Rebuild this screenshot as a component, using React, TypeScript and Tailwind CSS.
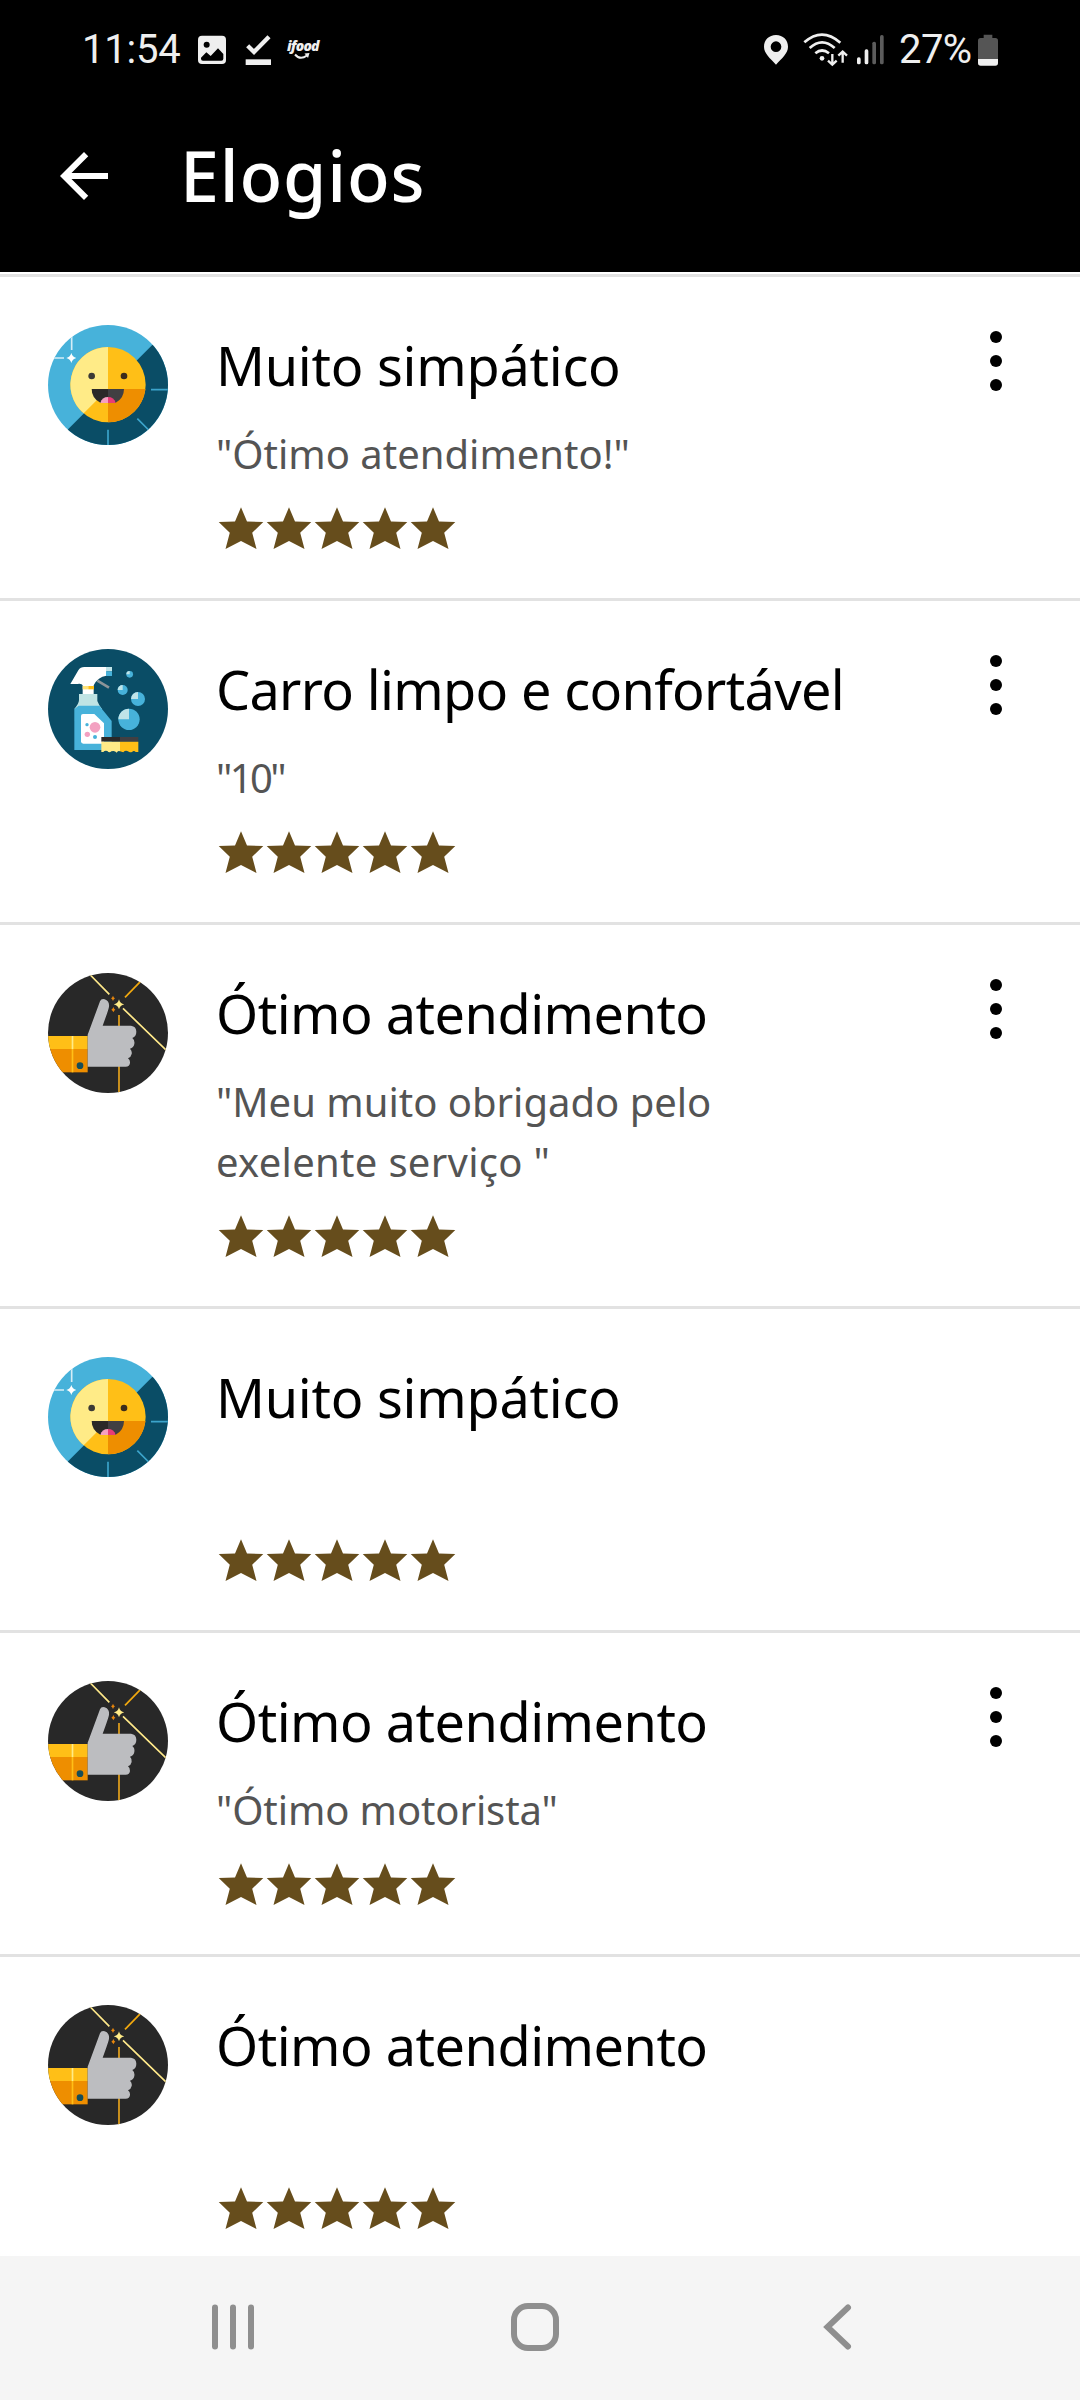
type AvatarKind = "smile" | "spray" | "thumb";

interface Line {
  text: string;
  className?: string;
}

interface Compliment {
  kind: AvatarKind;
  title: string;
  titleClass: string;
  lines: Line[];
  menu: boolean;
}

const COMPLIMENTS: Compliment[] = [
  { kind: "smile", title: "Muito simpático", titleClass: "tracking-[-0.25px]", lines: [{ text: '"Ótimo atendimento!"' }], menu: true },
  { kind: "spray", title: "Carro limpo e confortável", titleClass: "tracking-[-0.66px]", lines: [{ text: '"10"', className: "tracking-[-2.6px]" }], menu: true },
  {
    kind: "thumb",
    title: "Ótimo atendimento",
    titleClass: "tracking-[-0.5px]",
    lines: [{ text: '"Meu muito obrigado pelo' }, { text: 'exelente serviço "', className: "tracking-[0.3px]" }],
    menu: true,
  },
  { kind: "smile", title: "Muito simpático", titleClass: "tracking-[-0.25px]", lines: [], menu: false },
  { kind: "thumb", title: "Ótimo atendimento", titleClass: "tracking-[-0.5px]", lines: [{ text: '"Ótimo motorista"', className: "tracking-[-0.1px]" }], menu: true },
  { kind: "thumb", title: "Ótimo atendimento", titleClass: "tracking-[-0.5px]", lines: [], menu: false },
];

function SmileAvatar() {
  return (
    <svg className="block size-full" viewBox="24 30 360 360">
      <rect x="24" y="30" width="360" height="360" fill="#47b2da" />
      <path d="M24 403L403 24V403Z" fill="#0a4d66" />
      <circle cx="204" cy="209" r="113" fill="#ffbf17" />
      <path d="M204 96V222L131 295A113 113 0 0 1 204 96Z" fill="#ffeb87" />
      <path d="M204 222H316.500A113 113 0 0 1 204 322Z" fill="#ee8e00" />
      <circle cx="155" cy="183" r="10" fill="#3c3a36" />
      <circle cx="252" cy="183" r="10" fill="#3c2c1c" />
      <path d="M155 222H204V263H181Q155 250 155 222Z" fill="#2b2928" />
      <path d="M204 222H252Q252 250 227 263H204Z" fill="#413f42" />
      <path d="M181 263Q186 246 204 246V264H183Z" fill="#f5a0c0" />
      <path d="M227 263Q222 246 204 246V264H225Z" fill="#e93c77" />
      <path d="M95 60V105M40 129H72" stroke="#d5edf6" strokeWidth="5" />
      <path d="M94 114Q97 126 109 129Q97 132 94 144Q91 132 79 129Q91 126 94 114Z" fill="#fff" />
      <path d="M333 224H384M292 311L326 345M204 344V390" stroke="#3ca4cb" strokeWidth="5" />
    </svg>
  );
}

function SprayAvatar() {
  return (
    <svg className="block size-full" viewBox="24 27 360 360">
      <rect x="24" y="27" width="360" height="360" fill="#0a4d66" />
      <path d="M91 132L115 91Q121 81 133 81H199V107Q174 110 161 136H128Q126 130 112 132Z" fill="#fff" />
      <rect x="198" y="81" width="18" height="13" fill="#c0e4e8" />
      <rect x="198" y="94" width="18" height="14" fill="#47b2da" />
      <path d="M172 122L207 143" stroke="#8c9498" strokeWidth="8" />
      <rect x="128" y="135" width="33" height="28" fill="#fff" />
      <rect x="128" y="138" width="17" height="10" fill="#ffe47a" />
      <rect x="145" y="138" width="17" height="10" fill="#ffbf17" />
      <path d="M117 162H172V183Q176 194 186 207H103Q117 190 117 180Z" fill="#c0e4e4" />
      <path d="M116 197H178L215 243V330H103V207Z" fill="#47b2da" />
      <path d="M129 222H163L192 250V304Q192 311 185 311H130Q123 311 123 304V228Q123 222 129 222Z" fill="#fff" />
      <circle cx="165" cy="262" r="16" fill="#f3a1c1" />
      <circle cx="142" cy="283" r="8" fill="#f3a1c1" />
      <circle cx="141" cy="254" r="5" fill="#47b2da" />
      <circle cx="165" cy="291" r="6" fill="#47b2da" />
      <rect x="184" y="291" width="56" height="14" fill="#2b2928" />
      <rect x="240" y="291" width="55" height="14" fill="#413f42" />
      <path d="M184 305H240V334Q234 330 230 338Q224 330 214 334Q208 340 202 333Q194 331 190 336H184Z" fill="#ffeb87" />
      <path d="M240 305H295V336H287Q282 330 276 336Q268 338 264 334Q256 330 250 337L240 334Z" fill="#ffbf17" />
      {[[269, 103, 10], [248, 150, 15], [294, 177, 21], [267, 238, 32]].map(([x, y, r]) => (
        <g key={x}>
          <circle cx={x} cy={y} r={r} fill="#47b2da" />
          <path d={`M${x} ${y}H${x - r}A${r} ${r} 0 0 1 ${x} ${y - r}Z`} fill="#c0e4e8" />
        </g>
      ))}
    </svg>
  );
}

function ThumbAvatar() {
  return (
    <svg className="block size-full" viewBox="24 27 360 360">
      <rect x="24" y="27" width="360" height="360" fill="#282828" />
      <path d="M148 30L208 91M249 133L384 264" stroke="#ffe98a" strokeWidth="5" />
      <path d="M304 50L255 100" stroke="#f2a90f" strokeWidth="5" />
      <path d="M237 153V387" stroke="#e9a41c" strokeWidth="5" />
      <rect x="24" y="216" width="119" height="39" fill="#ffbf17" />
      <rect x="24" y="255" width="119" height="70" fill="#ee8e00" />
      <rect x="95" y="216" width="5" height="39" fill="#ffeb87" />
      <rect x="95" y="255" width="5" height="70" fill="#ffbf17" />
      <circle cx="120" cy="305" r="10" fill="#174d57" />
      <path
        d="M143 212L180 112Q184 103 194 106Q209 111 207 128Q206 136 188 185H273Q289 187 289 203Q289 217 277 222Q285 228 283 240Q281 251 270 254Q277 261 275 270Q273 280 264 283Q271 288 270 297Q269 308 257 308H143Z"
        fill="#bcbdc0"
      />
      <path d="M237 106Q240 119 253 121Q240 124 237 136Q234 124 221 121Q234 119 237 106Z" fill="#ffeb87" />
      <path d="M219 95Q221 102 225 103Q221 105 219 111Q217 105 213 103Q217 102 219 95ZM220 129Q222 135 226 137Q222 139 220 145Q218 139 214 137Q218 135 220 129Z" fill="#e8860c" />
    </svg>
  );
}

const AVATARS = { smile: SmileAvatar, spray: SprayAvatar, thumb: ThumbAvatar };

function Stars() {
  return (
    <div className="ml-px flex">
      {[0, 1, 2, 3, 4].map((i) => (
        <svg key={i} className="size-12" viewBox="0 0 48 48" fill="#664d1c">
          <path d="M24 3.300L30 17.400L46.300 18L35.200 28.700L39.500 45L24 37L8.500 45L12.800 28.700L1.700 18L18 17.400Z" />
        </svg>
      ))}
    </div>
  );
}

function Row({ item }: { item: Compliment }) {
  const Avatar = AVATARS[item.kind];
  return (
    <li className="flex shrink-0 items-start border-t-[3px] border-[#e2e2e2] pb-[46px] pl-12 pr-[72px]">
      <div className="mt-12 size-[120px] shrink-0 overflow-hidden rounded-full">
        <Avatar />
      </div>
      <div className="ml-12 mt-[52px] flex-1">
        <h2 className={"whitespace-nowrap text-[54px] leading-[72px] text-black " + item.titleClass}>{item.title}</h2>
        <div className="mt-[23px] min-h-[60px] text-[40px] leading-[60px] text-[#545454]">
          {item.lines.map((l) => (
            <p key={l.text} className={"whitespace-pre " + (l.className ?? "")}>{l.text}</p>
          ))}
        </div>
        <div className="mt-5">
          <Stars />
        </div>
      </div>
      {item.menu && (
        <button className="mt-[54px] flex w-6 flex-col items-center gap-3" aria-label="Mais opções">
          <span className="size-3 rounded-full bg-black" />
          <span className="size-3 rounded-full bg-black" />
          <span className="size-3 rounded-full bg-black" />
        </button>
      )}
    </li>
  );
}

function StatusBar() {
  return (
    <div className="flex h-20 items-start pl-[82px] pr-[81px] font-[Roboto,sans-serif] text-[40px] leading-[48px] text-[#efefef]">
      <span className="mt-4 w-[116px] tracking-[-0.2px]">11:54</span>
      <svg className="h-20 w-7" viewBox="414 0 84 240">
        <rect x="414" y="77" width="84" height="85" rx="12" fill="#efefef" />
        <circle cx="440" cy="104" r="9" fill="#000" />
        <path d="M423 143L439 127L452 138L474 115L490 132V146Q490 152 484 152H429Q423 152 423 146Z" fill="#000" />
      </svg>
      <svg className="ml-[19px] h-20 w-[27px]" viewBox="555 0 81 240">
        <path d="M563 107L582 126L627 80" fill="none" stroke="#efefef" strokeWidth="13" />
        <rect x="557" y="148" width="76" height="17" fill="#efefef" />
      </svg>
      <div className="ml-[15px] mt-[28px] flex flex-col">
        <span className="h-[15px] font-['Open_Sans',sans-serif] text-[14px] font-extrabold italic leading-[16px] tracking-[-0.8px]">ifood</span>
        <svg className="ml-1.5 h-[7px] w-5" viewBox="0 0 20 7">
          <path d="M2 1.500Q7 7.500 14 2.500" fill="none" stroke="#efefef" strokeWidth="2" />
          <path d="M11.500 0.500L16.500 0L15 5Z" fill="#efefef" />
        </svg>
      </div>
      <div className="flex-1" />
      <svg className="h-20 w-[27px]" viewBox="69 0 81 240">
        <path fillRule="evenodd" d="M108 75C87 75 72 90 72 110C72 130 90 144 108 164C126 144 144 130 144 110C144 90 129 75 108 75ZM108 94A16 16 0 1 1 108 126A16 16 0 1 1 108 94Z" fill="#efefef" />
      </svg>
      <svg className="ml-[13px] h-20 w-[45px]" viewBox="189 0 135 240" fill="none" stroke="#efefef" strokeWidth="8">
        <path d="M193 97Q246 50 301 98M209 114Q246 80 284 114M226 130Q246 113 267 130" />
        <circle cx="246" cy="145" r="7" fill="#efefef" stroke="none" />
        <path d="M277 132V163M264 152L277 164L290 152M308 158V126M295 137L308 125L321 137" strokeWidth="7" />
      </svg>
      <svg className="ml-2 h-20 w-[29px]" viewBox="348 0 87 240">
        <rect x="351" y="142" width="11" height="21" rx="5" fill="#efefef" />
        <rect x="374" y="118" width="11" height="45" rx="5" fill="#efefef" />
        <rect x="397" y="95" width="11" height="68" rx="5" fill="#5c5c5c" />
        <rect x="420" y="75" width="11" height="88" rx="5" fill="#5c5c5c" />
      </svg>
      <span className="ml-[14px] mt-4 w-[78px] tracking-[-0.6px]">27%</span>
      <svg className="h-20 w-[22px]" viewBox="711 0 66 240">
        <path d="M731 74H757V84H766Q774 84 774 92V148H714V92Q714 84 722 84H731Z" fill="#555" />
        <path d="M714 147H774V159Q774 167 766 167H722Q714 167 714 159Z" fill="#efefef" />
      </svg>
    </div>
  );
}

export default function App() {
  return (
    <div className="flex h-[2400px] w-[1080px] flex-col overflow-hidden bg-white font-['Noto_Sans',sans-serif]">
      <header className="h-[272px] shrink-0 bg-black pt-2.5">
        <StatusBar />
        <div className="flex h-[172px] items-center pl-12 text-white">
          <svg className="size-[72px]" viewBox="0 0 24 24" fill="currentColor">
            <path d="M20 11H7.830l5.590-5.590L12 4l-8 8 8 8 1.410-1.410L7.830 13H20v-2z" />
          </svg>
          <h1 className="-mt-0.5 ml-[60px] text-[70px] font-medium leading-[96px] tracking-[0.8px]">Elogios</h1>
        </div>
      </header>
      <ul className="mt-0.5 flex flex-1 flex-col overflow-hidden">
        {COMPLIMENTS.map((c, i) => (
          <Row key={i} item={c} />
        ))}
      </ul>
      <nav className="flex h-36 shrink-0 items-center bg-[#f5f5f5] pb-0.5 pl-[209px]">
        <svg className="h-12 w-12" viewBox="0 0 48 48" stroke="#8f8f8f" strokeWidth="6" strokeLinecap="round">
          <path d="M6 4.500V43.500M24 4.500V43.500M42 4.500V43.500" />
        </svg>
        <div className="ml-[254px] size-12 rounded-[17px] border-[6px] border-[#8f8f8f]" />
        <svg className="ml-[255px] h-12 w-12" viewBox="0 0 48 48" fill="none" stroke="#8f8f8f" strokeWidth="6" strokeLinecap="round">
          <path d="M34 4.500L13.500 24L34 43.500" />
        </svg>
      </nav>
    </div>
  );
}
